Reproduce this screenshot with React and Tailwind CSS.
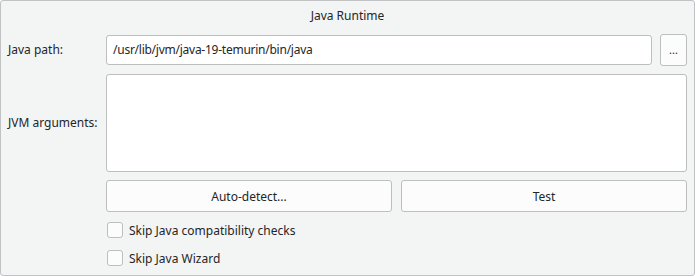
import React from "react";

function Checkbox({ label }) {
  return (
    <label className="flex h-[20px] items-center">
      <span className="ml-[1px] h-[16px] w-[16px] shrink-0 rounded-[3px] border border-[#bcbebf] bg-[#fcfcfc]" />
      <span className="ml-[6px] pt-[1px] leading-[18px]">{label}</span>
    </label>
  );
}

export default function App() {
  return (
    <div
      className="flex h-[276px] w-[695px] flex-col rounded-[3px] border border-[#c0c2c3] bg-[#f3f4f4] text-[12px] text-[#232629]"
      style={{ fontFamily: '"Noto Sans", sans-serif' }}
    >
      <div className="mt-[6px] h-[18px] text-center leading-[18px]">Java Runtime</div>
      <div className="mt-[9px] grid grid-cols-[90px_1fr] gap-x-2 gap-y-2 pl-[7px] pr-[7px]">
        <div className="flex items-center whitespace-nowrap leading-[18px]">Java path:</div>
        <div className="flex h-[32px] items-center gap-2">
          <div className="flex h-[30px] flex-1 items-center rounded-[3px] border border-[#bcbebf] bg-white pl-[6px] leading-[18px] tracking-[-0.25px]">
            /usr/lib/jvm/java-19-temurin/bin/java
          </div>
          <button className="flex h-[32px] w-[27px] items-center justify-center rounded-[3px] border border-[#bcbebf] bg-[#fcfcfc] pb-[2px] text-[11px] leading-none">
            ...
          </button>
        </div>

        <div className="flex items-center whitespace-nowrap leading-[18px]">JVM arguments:</div>
        <div className="h-[98px] rounded-[3px] border border-[#bcbebf] bg-white" />

        <div />
        <div className="grid grid-cols-2 gap-[9px]">
          <button className="h-[32px] rounded-[3px] border border-[#bcbebf] bg-[#fcfcfc] pt-[1px] leading-[18px]">
            Auto-detect...
          </button>
          <button className="h-[32px] rounded-[3px] border border-[#bcbebf] bg-[#fcfcfc] pt-[1px] leading-[18px]">
            Test
          </button>
        </div>

        <div />
        <div className="flex flex-col gap-2">
          <Checkbox label="Skip Java compatibility checks" />
          <Checkbox label="Skip Java Wizard" />
        </div>
      </div>
    </div>
  );
}
